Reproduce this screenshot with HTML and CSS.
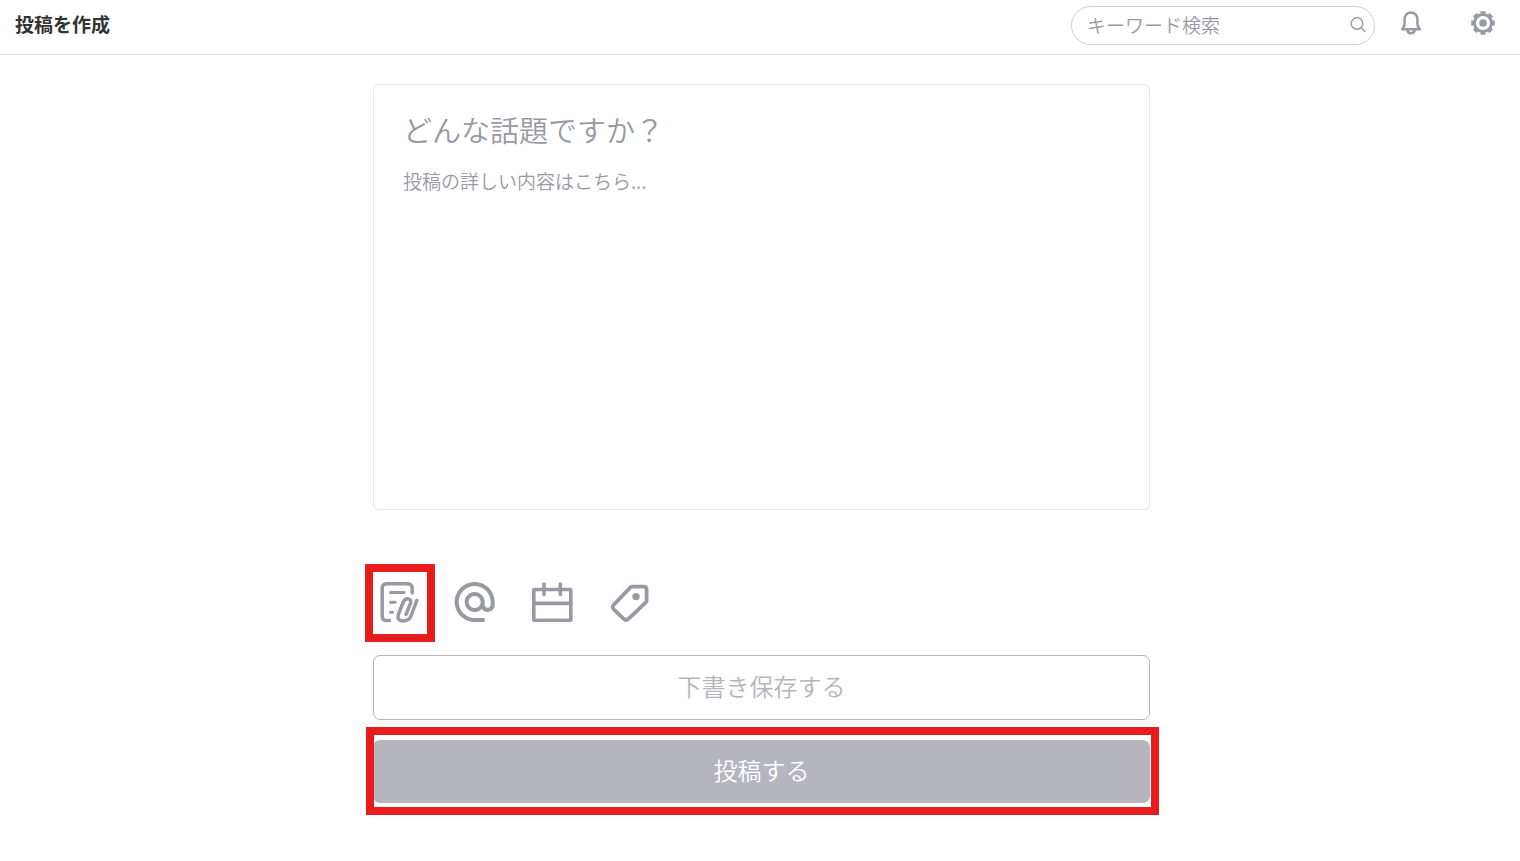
FILE: index.html
```html
<!DOCTYPE html>
<html lang="ja">
<head>
    <meta charset="UTF-8">
    <meta name="viewport" content="width=device-width, initial-scale=1.0">
    <title>投稿を作成</title>
    <link rel="stylesheet" href="styles.css">
</head>
<body>
    <header class="header">
        <h1>投稿を作成</h1>
        <div class="search">
            <input type="search" placeholder="キーワード検索" aria-label="キーワード検索">
            <svg width="16" height="16" viewBox="0 0 16 16" stroke-width="1.4">
                <circle cx="7" cy="6.5" r="5.8"/>
                <path d="M11.2 10.7L15 14.5"/>
            </svg>
        </div>
        <button type="button" class="icon-button" aria-label="通知">
            <svg width="24" height="24" viewBox="0 0 24 24" stroke-width="2.5">
                <path d="M3.2 18.2H20.8C19.3 16.6 18.4 15.4 18.4 13V8C18.4 4.2 15.6 1.4 12 1.4S5.6 4.2 5.6 8V13C5.6 15.4 4.7 16.6 3.2 18.2Z"/>
                <path d="M8.2 19C9 23.2 15 23.2 15.8 19"/>
            </svg>
        </button>
        <button type="button" class="icon-button" aria-label="設定">
            <svg width="24" height="24" viewBox="-12 -12 24 24">
                <circle r="8.5" stroke-width="2.8"/>
                <g class="teeth">
                    <path d="M9 0H11.8M-9 0H-11.8M0 9V11.8M0 -9V-11.8"/>
                    <path d="M9 0H11.8M-9 0H-11.8M0 9V11.8M0 -9V-11.8" transform="rotate(45)"/>
                </g>
                <circle class="fill" r="3.8"/>
            </svg>
        </button>
    </header>

    <main>
        <form class="post-form">
            <div class="editor">
                <input type="text" placeholder="どんな話題ですか？" aria-label="タイトル">
                <textarea placeholder="投稿の詳しい内容はこちら..." aria-label="本文"></textarea>
            </div>

            <div class="tools">
                <button type="button" class="marked" aria-label="ファイルを添付">
                    <svg width="48" height="48" viewBox="0 0 48 48" stroke-width="3.5">
                        <path d="M38.2 15V10.5Q38.2 5.7 33.4 5.7H13Q8.2 5.7 8.2 10.5V38Q8.2 42.6 13 42.6H15.5"/>
                        <path d="M16.5 14.4H30.2M16.5 24.3H21.3M16.5 34.3H18.5" stroke-width="3"/>
                        <path d="M42.8 22.5L36.8 38.5C34 45 22 44.5 24.2 37L28.8 25C31 19 38.2 20 36.6 25L32 36.5"/>
                    </svg>
                </button>
                <button type="button" aria-label="メンション">
                    <svg width="48" height="48" viewBox="0.3 0 23.7 24">
                        <path class="fill" d="M12 2C6.48 2 2 6.48 2 12s4.48 10 10 10h5v-2h-5c-4.34 0-8-3.66-8-8s3.66-8 8-8 8 3.66 8 8v1.43c0 .79-.71 1.57-1.5 1.57s-1.5-.78-1.5-1.57V12c0-2.76-2.24-5-5-5s-5 2.24-5 5 2.24 5 5 5c1.38 0 2.64-.56 3.54-1.47.65.89 1.77 1.47 2.96 1.47 1.97 0 3.5-1.6 3.5-3.57V12c0-5.52-4.48-10-10-10zm0 13c-1.66 0-3-1.34-3-3s1.34-3 3-3 3 1.34 3 3-1.34 3-3 3z"/>
                    </svg>
                </button>
                <button type="button" aria-label="日程">
                    <svg width="48" height="48" viewBox="0 0 48 48" stroke-width="3.6">
                        <rect x="5.8" y="11.5" width="37" height="30.7" rx="0.5"/>
                        <path d="M5.8 25.4H42.8M16 6V16.5M32.3 6V16.5"/>
                    </svg>
                </button>
                <button type="button" aria-label="タグ">
                    <svg width="48" height="48" viewBox="0 0 48 48" stroke-width="3.8">
                        <path d="M27 8.7H38.5Q41.6 8.7 41.6 11.8V22.5Q41.6 23.5 40.8 24.3L23.5 40.8Q21 43 18.7 40.8L8.8 31.3Q6.5 29 8.8 26.8L25.2 9.6Q26 8.7 27 8.7Z"/>
                        <circle class="fill" cx="31" cy="18.6" r="3.7"/>
                    </svg>
                </button>
            </div>

            <button type="button" class="button draft">下書き保存する</button>
            <div class="publish">
                <button type="submit" class="button">投稿する</button>
            </div>
        </form>
    </main>
</body>
</html>
```
FILE: styles.css
```css
* {
    box-sizing: border-box;
}
body {
    margin: 0;
    background-color: #fff;
    color: #333;
    font-family: "Noto Sans CJK JP", sans-serif;
    font-size: 19px;
    font-weight: 350;
}
button, input, textarea {
    font: inherit;
    color: #9999a3;
    background: none;
    border: none;
    padding: 0;
}
input, textarea {
    outline: none;
}
button {
    cursor: pointer;
}
::placeholder {
    color: #9999a3;
    opacity: 1;
}
svg {
    display: block;
    fill: none;
    stroke: #9999a3;
    stroke-linecap: round;
    stroke-linejoin: round;
}
svg .fill {
    fill: #9999a3;
    stroke: none;
}
svg .teeth {
    stroke-width: 5px;
    stroke-linecap: butt;
}

/* Header */
.header {
    display: flex;
    align-items: center;
    padding: 6px 25px 9px 15px;
    border-bottom: 1px solid #e6e6eb;
}
.header h1 {
    flex: 1;
    margin: 0;
    padding-bottom: 4px;
    font-size: 19px;
    line-height: 34px;
    font-weight: bold;
}
.search {
    display: flex;
    align-items: center;
    width: 304px;
    height: 39px;
    padding: 0 8px 2px 15px;
    border: 1px solid #d0d0d8;
    border-radius: 20px;
}
.search input {
    flex: 1;
    min-width: 0;
    height: 34px;
}
.icon-button {
    align-self: flex-start;
    height: 33px;
    margin-left: 24px;
}
.icon-button + .icon-button {
    margin-left: 48px;
}

/* Post form */
.post-form {
    display: flex;
    flex-direction: column;
    max-width: 780px;
    margin: 29px auto;
    padding-left: 3px;
}
.editor {
    display: flex;
    flex-direction: column;
    gap: 10px;
    height: 426px;
    padding: 22px 29px;
    border: 1px solid #e6e6eb;
    border-radius: 6px;
}
.editor input {
    font-size: 29px;
    height: 44px;
}
.editor textarea {
    flex: 1;
    line-height: 40px;
    resize: none;
}
.tools {
    display: flex;
    gap: 29px;
    margin: 68px 0 29px;
    padding-left: 1px;
}
.button {
    width: 100%;
    height: 63px;
    padding-bottom: 5px;
    border-radius: 7px;
    background-color: #b5b5be;
    color: #fff;
    font-size: 24px;
}
.draft {
    height: 65px;
    border: 1px solid #b5b5be;
    background-color: #fff;
    color: #b5b5be;
}
.publish {
    margin-top: 20px;
}

/* Red highlight frames */
.marked, .publish {
    position: relative;
}
.marked::after, .publish::after {
    content: "";
    position: absolute;
    border: 8px solid #e81c1c;
    pointer-events: none;
}
.marked::after {
    inset: -14px -13px -16px -9px;
}
.publish::after {
    inset: -13px -9px -12px -7px;
}
```
